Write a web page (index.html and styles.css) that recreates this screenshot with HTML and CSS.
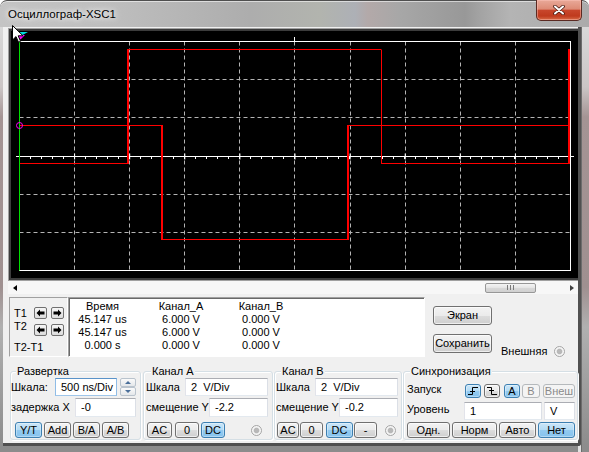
FILE: index.html
```html
<!DOCTYPE html>
<html lang="ru">
<head>
<meta charset="utf-8">
<title>Осциллограф-XSC1</title>
<link rel="stylesheet" href="styles.css">
</head>
<body>
<div class="window">
  <div class="titlebar">
    <span class="title">Осциллограф-XSC1</span>
    <div class="close">
      <svg width="12" height="10" viewBox="0 0 12 10"><path d="M2 1.5L10 8.5M10 1.5L2 8.5" stroke="#4a1a12" stroke-width="3.6" stroke-linecap="round"/><path d="M2 1.5L10 8.5M10 1.5L2 8.5" stroke="#fff" stroke-width="2" stroke-linecap="round"/></svg>
    </div>
  </div>
  <div class="frame">
    <div class="client">
      <div class="screen">
        <svg class="scope" width="567" height="247" viewBox="0 0 567 247">
          <rect width="567" height="247" fill="#000"/>
          <path d="M63.5 10.5V239.5M118.5 10.5V239.5M173.5 10.5V239.5M228.5 10.5V239.5M283.5 10.5V239.5M339.5 10.5V239.5M394.5 10.5V239.5M449.5 10.5V239.5M504.5 10.5V239.5M8.5 48.5H559.5M8.5 86.5H559.5M8.5 163.5H559.5M8.5 201.5H559.5" stroke="#b4b4b4" stroke-dasharray="4 3" fill="none"/>
          <rect x="8.5" y="10.5" width="551" height="229" fill="none" stroke="#fff"/>
          <path d="M5 125.5H563" stroke="#fff"/>
          <path d="M8 127H560" stroke="#fff" stroke-width="2" stroke-dasharray="1 10"/>
          <path d="M8 125.5H560" stroke="#fff" stroke-width="6" stroke-dasharray="1 54.1"/>
          <path d="M283.5 6V10.5" stroke="#fff"/>
          <path d="M9 132.5H117M117 18.5H370M370.5 18.5V132.5M370 132.5H558M9 94.5H151M151 208.5H337M337 94.5H558" stroke="#f00" fill="none"/>
          <path d="M117 133V18M558 133V18M151 94V209M337 209V94" stroke="#f00" stroke-width="2" fill="none"/>
          <path d="M8.5 11V239.5" stroke="#00e000"/>
          <circle cx="8.5" cy="94.5" r="3" fill="none" stroke="#ff00ff"/>
          <polygon points="4,1 17,1 10.5,4.5" fill="#00e0e0"/>
          <polygon points="5,4 14,4 9.5,8.5" fill="#ff00ff"/>
        </svg>
      </div>
      <div class="hscroll">
        <span class="arr-l"></span>
        <span class="thumb"><span class="grip"></span></span>
        <span class="arr-r"></span>
      </div>
      <div class="readrow">
        <div class="tbox">
          <div class="trow">
            <span class="tl">T1</span>
            <span class="abtn"><svg width="9" height="8" viewBox="0 0 9 8"><path d="M0.5 4L4 0.5V2.5H8.5V5.5H4V7.5Z"/></svg></span>
            <span class="abtn"><svg width="9" height="8" viewBox="0 0 9 8"><path d="M8.5 4L5 0.5V2.5H0.5V5.5H5V7.5Z"/></svg></span>
          </div>
          <div class="trow">
            <span class="tl t2l">T2</span>
            <span class="abtn"><svg width="9" height="8" viewBox="0 0 9 8"><path d="M0.5 4L4 0.5V2.5H8.5V5.5H4V7.5Z"/></svg></span>
            <span class="abtn"><svg width="9" height="8" viewBox="0 0 9 8"><path d="M8.5 4L5 0.5V2.5H0.5V5.5H5V7.5Z"/></svg></span>
          </div>
          <div class="tdiff">T2-T1</div>
        </div>
        <div class="readout">
          <span>Время</span><span>Канал_А</span><span>Канал_В</span>
          <span>45.147 us</span><span>6.000 V</span><span>0.000 V</span>
          <span>45.147 us</span><span>6.000 V</span><span>0.000 V</span>
          <span>0.000 s</span><span>0.000 V</span><span>0.000 V</span>
        </div>
        <div class="sidebtns">
          <span class="btn big">Экран</span>
          <span class="btn big">Сохранить</span>
        </div>
        <div class="ext"><span>Внешняя</span><span class="radio"></span></div>
      </div>
      <div class="groups">
        <div class="group g1">
          <span class="legend">Развертка</span>
          <div class="row"><span class="lbl">Шкала:</span><span class="field focus w62">500 ns/Div</span><span class="spin"><i class="up"></i><i class="dn"></i></span></div>
          <div class="row r2"><span class="lbl">задержка X</span><span class="field w61">-0</span></div>
          <div class="btnrow sp4">
            <span class="btn on w27">Y/T</span><span class="btn w27 ml2">Add</span><span class="btn w27 ml2">B/A</span><span class="btn w27 ml2">A/B</span>
          </div>
        </div>
        <div class="group g2">
          <span class="legend">Канал А</span>
          <div class="row"><span class="lbl">Шкала</span><span class="field w83">2  V/Div</span></div>
          <div class="row r2"><span class="lbl">смещение Y</span><span class="field w59">-2.2</span></div>
          <div class="btnrow sp1">
            <span class="btn w25">AC</span><span class="btn w24 ml3">0</span><span class="btn on w24 ml2">DC</span><span class="radio rr6"></span>
          </div>
        </div>
        <div class="group g3">
          <span class="legend">Канал В</span>
          <div class="row"><span class="lbl">Шкала</span><span class="field w83">2  V/Div</span></div>
          <div class="row r2"><span class="lbl">смещение Y</span><span class="field w59">-0.2</span></div>
          <div class="btnrow sp1">
            <span class="btn w22">AC</span><span class="btn w23 ml1">0</span><span class="btn on w27 ml3">DC</span><span class="btn w23 ml1">-</span><span class="radio rr2"></span>
          </div>
        </div>
        <div class="group g4">
          <span class="legend">Синхронизация</span>
          <div class="row trig">
            <span class="lbl w58">Запуск</span>
            <span class="btn on sb w16"><svg width="12" height="10" viewBox="0 0 12 10"><path d="M1 8.5H5.5V1.5H11M3 5.5H8" stroke="#000" fill="none"/></svg></span>
            <span class="btn sb w16 ml3"><svg width="12" height="10" viewBox="0 0 12 10"><path d="M1 1.5H5.5V8.5H11M3 4.5H8" stroke="#000" fill="none"/></svg></span>
            <span class="btn on sb w16 ml4">A</span>
            <span class="btn dis sb w18 ml2">B</span>
            <span class="btn dis sb w32 ml3">Внеш</span>
          </div>
          <div class="row lvl">
            <span class="lbl w57">Уровень</span>
            <span class="field w78 nol">1</span>
            <span class="field w31 ml2 nol">V</span>
          </div>
          <div class="btnrow g4b">
            <span class="btn w43">Одн.</span><span class="btn w45 ml2">Норм</span><span class="btn w37 ml2">Авто</span><span class="btn on w37 ml2">Нет</span>
          </div>
        </div>
      </div>
    </div>
  </div>
  <svg class="cursor" width="13" height="20" viewBox="0 0 13 20"><path d="M1.5 1.5V16L5 12.6L7.5 18.2L9.6 17.3L7.2 11.8H12Z" fill="#fff" stroke="#000" stroke-linejoin="round"/></svg>
</div>
</body>
</html>
```
FILE: styles.css
```css
* { box-sizing: border-box; margin: 0; padding: 0; }
html, body { background: #ffffff; }
body {
  font-family: "Liberation Sans", Arial, sans-serif;
  font-size: 11px;
  line-height: 13px;
  color: #000;
}
.window {
  position: relative;
  width: 589px;
  height: 452px;
  overflow: hidden;
  display: flex;
  flex-direction: column;
  background: #9a9a9a;
  border-radius: 7px 7px 0 0;
}
.titlebar {
  flex: none;
  height: 27px;
  display: flex;
  align-items: flex-start;
  border-top: 1px solid #4f4f4f;
  border-radius: 7px 7px 0 0;
  background: linear-gradient(to right, #c4c4c4 0, #bdbdbd 120px, #adadad 250px, #b2b4ae 320px, #adb0b6 355px, #b3a9a9 368px, #a7a7a7 400px, #989898 465px, #a3a3a3 480px, #b4b4b4 510px, #ababab 589px);
  box-shadow: inset 0 1px 0 rgba(255,255,255,.55);
}
.title {
  margin: 6px 0 0 8px;
  font-size: 11.5px;
  line-height: 14px;
  text-shadow: 0 0 5px #fff, 0 0 9px rgba(255,255,255,.9);
}
.close {
  margin: -1px 7px 0 auto;
  width: 46px;
  height: 21px;
  border: 1px solid #5b2a22;
  border-top: none;
  border-radius: 0 0 5px 5px;
  background: linear-gradient(#e9a999 0%, #dd8b76 45%, #c8462c 52%, #bf3a1e 80%, #d86b47 100%);
  box-shadow: inset 0 0 0 1px rgba(255,200,190,.45);
  display: flex;
  align-items: center;
  justify-content: center;
}
.close svg { display: block; }
.frame {
  flex: 1;
  display: flex;
  padding: 0 8px 6px 3px;
  background:
    linear-gradient(to right, transparent 0, transparent 578px, #e2e2e2 578px, #e2e2e2 581px, #6c6c6c 581px, #6c6c6c 582px, transparent 582px),
    linear-gradient(to bottom, #d8d8d8 0, #cbc6c6 60px, #a49494 90px, #9f9090 260px, #b0b0b0 300px, #8c8c8c 420px);
}
.client {
  flex: 1;
  display: flex;
  flex-direction: column;
  background: #f0f0f0;
  border-right: 3px solid #505050;
  border-bottom: 3px solid #505050;
  border-bottom-right-radius: 3px;
}
.screen {
  margin: 1px 0 0 5px;
  width: 570px;
  border: 1px solid #a0a0a0;
  border-right: none;
  padding: 2px 0 2px 2px;
  background: #3c3c3c;
}
.scope { display: block; }
.hscroll {
  margin-left: 5px;
  width: 570px;
  height: 13px;
  display: flex;
  align-items: center;
  padding: 0 4px 0 5px;
  background: #f7f7f7;
}
.arr-l {
  width: 0; height: 0;
  border-style: solid;
  border-width: 3.5px 4px 3.5px 0;
  border-color: transparent #000 transparent transparent;
}
.arr-r {
  width: 0; height: 0;
  border-style: solid;
  border-width: 3.5px 0 3.5px 4px;
  border-color: transparent transparent transparent #404040;
}
.thumb {
  margin: 0 34px 0 auto;
  width: 51px;
  height: 10px;
  border: 1px solid #979797;
  border-radius: 2px;
  background: linear-gradient(#f4f4f4, #e4e4e4 50%, #d8d8d8 51%, #d0d0d0);
  display: flex;
  align-items: center;
  justify-content: center;
}
.grip {
  width: 7px;
  height: 5px;
  background: linear-gradient(to right, #7a7a7a 0 1px, transparent 1px 3px, #7a7a7a 3px 4px, transparent 4px 6px, #7a7a7a 6px 7px);
}
.readrow {
  display: flex;
  align-items: flex-start;
  height: 60px;
  margin-top: 3px;
  padding-left: 6px;
}
.tbox {
  width: 59px;
  height: 60px;
  border: 1px solid;
  border-color: #a0a0a0 #ffffff #ffffff #a0a0a0;
  padding: 9px 0 0 4px;
}
.trow { display: flex; align-items: center; height: 12px; }
.trow + .trow { margin-top: 5px; }
.tl { width: 20px; flex: none; }
.t2l { align-self: flex-start; margin-top: -4px; }
.abtn {
  width: 13px;
  height: 12px;
  flex: none;
  border: 1px solid #707070;
  border-radius: 2px;
  background: linear-gradient(#f6f6f6, #dcdcdc);
  display: flex;
  align-items: center;
  justify-content: center;
}
.abtn + .abtn { margin-left: 4px; }
.abtn svg { display: block; }
.tdiff { margin-top: 5px; }
.readout {
  width: 357px;
  height: 60px;
  border: 1px solid;
  border-color: #a0a0a0 #ffffff #ffffff #a0a0a0;
  box-shadow: inset 1px 1px 0 #696969;
  background: #fff;
  display: grid;
  grid-template-columns: 67px 90px 70px;
  grid-auto-rows: 13px;
  align-content: start;
  padding-top: 2px;
  text-align: center;
  white-space: nowrap;
}
.sidebtns {
  margin-left: 8px;
  padding-top: 9px;
  display: flex;
  flex-direction: column;
  gap: 9px;
}
.btn {
  display: flex;
  align-items: center;
  justify-content: center;
  flex: none;
  height: 16px;
  border: 1px solid #707070;
  border-radius: 3px;
  background: linear-gradient(#f3f3f3 0%, #ebebeb 50%, #dddddd 51%, #cfcfcf 100%);
  box-shadow: inset 0 0 0 1px rgba(255,255,255,.65);
  white-space: nowrap;
}
.btn svg { display: block; }
.big { width: 59px; height: 19px; }
.on {
  border-color: #3c7fb1;
  background: linear-gradient(#cbe6f8 0%, #b2dbf5 50%, #93caf0 51%, #86c3ee 100%);
  box-shadow: inset 0 0 0 1px rgba(255,255,255,.35);
}
.dis {
  border-color: #b5b9bc;
  background: #f4f4f4;
  color: #8a8a8a;
  box-shadow: none;
}
.ext {
  display: flex;
  align-items: center;
  margin: 47px 0 0 9px;
  height: 14px;
}
.radio {
  flex: none;
  width: 11px;
  height: 11px;
  border-radius: 50%;
  border: 1px solid #a5a5a5;
  background: radial-gradient(circle, #b8b8b8 0 2.4px, #d8d8d8 2.8px, #f6f6f6 3.4px);
}
.ext .radio { margin-left: 7px; }
.groups {
  display: flex;
  margin-top: 14px;
  padding-left: 7px;
}
.group {
  position: relative;
  height: 69px;
  border: 1px solid #d5dfe5;
  border-radius: 3px;
  box-shadow: inset 1px 1px 0 #fff, 1px 1px 0 #fff;
  padding-top: 6px;
}
.g1 { width: 131px; padding-right: 4px; }
.g2 { width: 130px; margin-left: 2px; padding-left: 2px; padding-right: 4px; }
.g3 { width: 128px; margin-left: 1px; padding-left: 1px; padding-right: 3px; }
.g4 { width: 175px; margin-left: 1px; padding-left: 3px; padding-right: 2px; }
.legend {
  position: absolute;
  top: -7px;
  left: 6px;
  padding: 0 1px;
  background: #f0f0f0;
  white-space: nowrap;
}
.g1 .legend { left: 5px; }
.g2 .legend { left: 7px; }
.row { display: flex; align-items: center; height: 18px; }
.r2 { height: 19px; margin-top: 2px; }
.lbl { flex: none; white-space: nowrap; }
.g4 .lbl { margin-top: -3px; }
.trig { height: 14px; margin-top: 6px; }
.lvl { height: 18px; margin-top: 4px; }
.btnrow { display: flex; align-items: center; height: 16px; margin-top: 5px; }
.g4b { margin-top: 2px; }
.sp4 { padding-left: 4px; }
.sp1 { padding-left: 1px; }
.field {
  flex: none;
  margin-left: auto;
  height: 100%;
  border: 1px solid;
  border-color: #abadb3 #dbdfe6 #e3e9ef #e2e3ea;
  background: #fff;
  padding-left: 5px;
  display: flex;
  align-items: center;
  white-space: pre;
}
.nol { margin-left: 0; }
.focus { border-color: #5a93c9 #8fbce6 #9fc6ea #8fbce6; }
.spin {
  flex: none;
  margin-left: 3px;
  width: 16px;
  height: 18px;
  display: flex;
  flex-direction: column;
}
.spin i {
  flex: 1;
  display: flex;
  align-items: center;
  justify-content: center;
  border: 1px solid #b9c3cd;
  border-radius: 2px;
  background: linear-gradient(#fafafa, #e4e7ea);
}
.spin i::after {
  content: "";
  width: 0; height: 0;
  border-style: solid;
  border-color: transparent;
}
.spin .up::after { border-width: 0 3.5px 3px; border-bottom-color: #4a6f9a; }
.spin .dn::after { border-width: 3px 3.5px 0; border-top-color: #4a6f9a; }
.sb { height: 14px; }
.rr6 { margin: 0 6px 0 auto; }
.rr2 { margin: 0 2px 0 auto; }
.ml1 { margin-left: 1px; }
.ml2 { margin-left: 2px; }
.ml3 { margin-left: 3px; }
.ml4 { margin-left: 4px; }
.w16 { width: 16px; }
.w18 { width: 18px; }
.w22 { width: 22px; }
.w23 { width: 23px; }
.w24 { width: 24px; }
.w25 { width: 25px; }
.w27 { width: 27px; }
.w31 { width: 31px; }
.w32 { width: 32px; }
.w37 { width: 37px; }
.w43 { width: 43px; }
.w45 { width: 45px; }
.w57 { width: 57px; }
.w58 { width: 58px; }
.w59 { width: 59px; }
.w61 { width: 61px; }
.w62 { width: 62px; }
.w78 { width: 78px; }
.w83 { width: 83px; }
.cursor {
  position: absolute;
  left: 11px;
  top: 24px;
}
```
